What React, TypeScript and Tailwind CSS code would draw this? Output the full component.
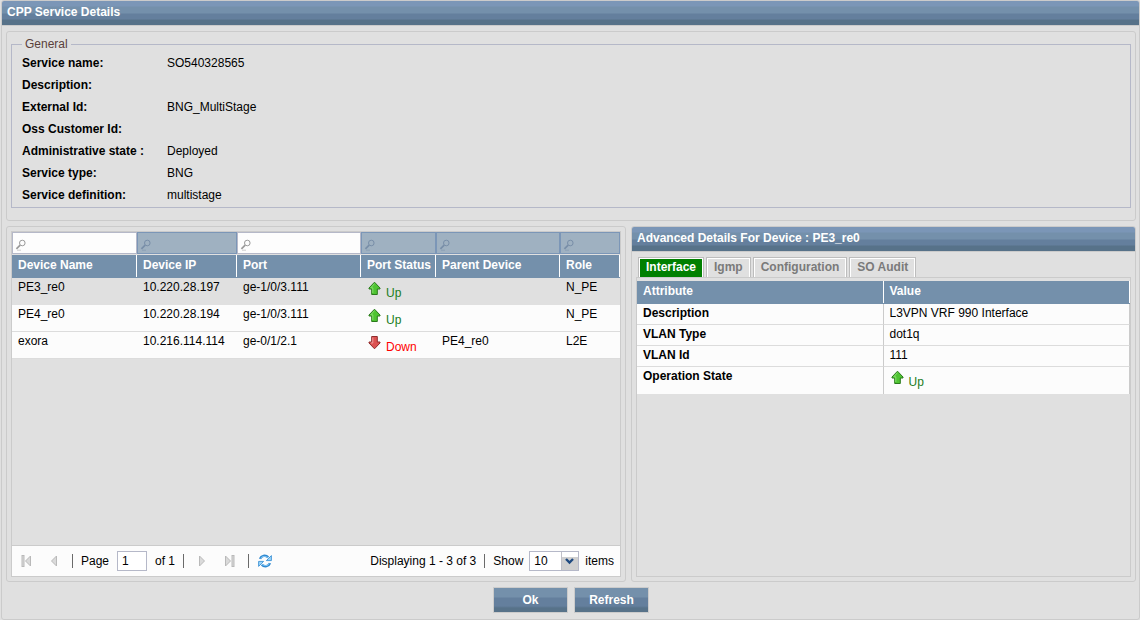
import { useState } from "react";

const BAR =
  "bg-[linear-gradient(to_bottom,#7b96b7_0,#7b96b7_5px,#7490ab_6px,#7490ab_12px,#647f9d_13px,#647f9d_18px,#577289_19px)]";
const BUTTON =
  "bg-[linear-gradient(to_bottom,#7490ab_0,#7490ab_9px,#647f9d_10px,#647f9d_18px,#577289_20px)]";

const generalFields = [
  { label: "Service name:", value: "SO540328565" },
  { label: "Description:", value: "" },
  { label: "External Id:", value: "BNG_MultiStage" },
  { label: "Oss Customer Id:", value: "" },
  { label: "Administrative state :", value: "Deployed" },
  { label: "Service type:", value: "BNG" },
  { label: "Service definition:", value: "multistage" },
];

const columns = [
  { name: "Device Name", width: "w-[125px]", searchable: true },
  { name: "Device IP", width: "w-[100px]", searchable: false },
  { name: "Port", width: "w-[124px]", searchable: true },
  { name: "Port Status", width: "w-[75px]", searchable: false },
  { name: "Parent Device", width: "w-[124px]", searchable: false },
  { name: "Role", width: "", searchable: false },
];

const devices = [
  { name: "PE3_re0", ip: "10.220.28.197", port: "ge-1/0/3.111", up: true, parent: "", role: "N_PE" },
  { name: "PE4_re0", ip: "10.220.28.194", port: "ge-1/0/3.111", up: true, parent: "", role: "N_PE" },
  { name: "exora", ip: "10.216.114.114", port: "ge-0/1/2.1", up: false, parent: "PE4_re0", role: "L2E" },
];

const attributes = [
  { name: "Description", value: "L3VPN VRF 990 Interface" },
  { name: "VLAN Type", value: "dot1q" },
  { name: "VLAN Id", value: "111" },
];

const tabs = ["Interface", "Igmp", "Configuration", "SO Audit"];

function ArrowIcon({ up }: { up: boolean }) {
  return up ? (
    <svg width="14" height="15" viewBox="0 0 14 15" className="shrink-0">
      <path d="M7.5 1.2 L13 7 V8 H10.3 V13.5 H4.7 V8 H2 V7 Z" fill="#4fc432" stroke="#2a7a1c" />
      <path d="M7.5 2.6 L3.8 6.8 H5.8 V12" fill="none" stroke="#86df6e" />
    </svg>
  ) : (
    <svg width="14" height="15" viewBox="0 0 14 15" className="shrink-0">
      <path d="M4.7 1.5 H10.3 V7 H13 V8 L7.5 13.8 L2 8 V7 H4.7 Z" fill="#dc5252" stroke="#8f2c2c" />
      <path d="M5.8 2.5 V8 H4" fill="none" stroke="#ef9c9c" />
    </svg>
  );
}

function Status({ up }: { up: boolean }) {
  return (
    <div className="flex items-start gap-[5px] pt-[3px]">
      <ArrowIcon up={up} />
      <span className={up ? "pt-[3px] text-[#1b7d1b]" : "pt-[3px] text-[#ff0000]"}>
        {up ? "Up" : "Down"}
      </span>
    </div>
  );
}

function SearchIcon({ dim }: { dim: boolean }) {
  return (
    <svg
      width="12"
      height="12"
      viewBox="0 0 12 12"
      fill="none"
      stroke={dim ? "#788ea8" : "#9a9a9a"}
      className="pointer-events-none absolute bottom-[3px] left-[3px]"
    >
      <circle cx="7.3" cy="4" r="2.8" />
      <path d="M5.2 6.2 L1.4 9.8" strokeWidth="1.7" />
      <path d="M2 11.2 H6" strokeWidth="0.5" />
    </svg>
  );
}

function PageIcon({ last, flip }: { last?: boolean; flip?: boolean }) {
  return (
    <svg width="14" height="14" viewBox="0 0 14 14" className={flip ? "-scale-x-100" : ""}>
      <path d="M3.5 2 L8.5 7 L3.5 12 Z" fill="#dadada" stroke="#b9b9b9" />
      {last && <rect x="10" y="1.5" width="2" height="11" fill="#dadada" stroke="#b9b9b9" />}
    </svg>
  );
}

function RefreshIcon() {
  return (
    <svg width="16" height="16" viewBox="0 0 16 16" fill="none">
      <path d="M3 5.8 C4.2 2.6 8.6 1.6 11.2 4.4" stroke="#2b86cf" strokeWidth="2.4" />
      <path d="M14.4 2.6 V7.6 H9.4 Z" fill="#9bd6fb" stroke="#2b86cf" strokeWidth="0.8" />
      <path d="M3.6 5.4 C5 3 8.8 2.5 11.4 5" stroke="#8fd0fa" strokeWidth="0.9" />
      <path d="M13 10.2 C11.8 13.4 7.4 14.4 4.8 11.6" stroke="#2b86cf" strokeWidth="2.4" />
      <path d="M1.6 13.4 V8.4 H6.6 Z" fill="#9bd6fb" stroke="#2b86cf" strokeWidth="0.8" />
      <path d="M12.4 10.6 C11 13 7.2 13.5 4.6 11" stroke="#8fd0fa" strokeWidth="0.9" />
    </svg>
  );
}

function Divider() {
  return <span className="h-3.5 w-px bg-[#6a6a6a]" />;
}

function GeneralPanel() {
  return (
    <section className="rounded-[3px] border border-[#cbcbcb] px-1 pt-1 pb-3">
      <fieldset className="border border-[#b5b8c8] px-2.5 pb-px">
        <legend className="px-[3px] leading-[16px] text-[#5a403c]">General</legend>
        <dl>
          {generalFields.map((f) => (
            <div key={f.label} className="flex h-[22px] items-center">
              <dt className="w-[145px] font-bold">{f.label}</dt>
              <dd>{f.value}</dd>
            </div>
          ))}
        </dl>
      </fieldset>
    </section>
  );
}

function Pager() {
  return (
    <div className="flex h-[31px] items-center border-t border-[#cbcbcb] bg-[#fcfcfc] pr-1.5 pl-2">
      <div className="flex items-center gap-3">
        <button type="button" aria-label="First page">
          <PageIcon last flip />
        </button>
        <button type="button" aria-label="Previous page">
          <PageIcon flip />
        </button>
        <Divider />
      </div>
      <label className="flex items-center gap-2 pl-2">
        Page
        <input
          defaultValue="1"
          className="h-5 w-[30px] border border-[#b5b8c8] bg-white pl-1 text-[12px]"
        />
        <span>of 1</span>
      </label>
      <div className="flex items-center gap-3 pl-2">
        <Divider />
        <button type="button" aria-label="Next page">
          <PageIcon />
        </button>
        <button type="button" aria-label="Last page">
          <PageIcon last />
        </button>
        <Divider />
      </div>
      <button type="button" aria-label="Reload" className="pl-2">
        <RefreshIcon />
      </button>
      <span className="ml-auto pr-2">Displaying 1 - 3 of 3</span>
      <Divider />
      <label className="flex items-center gap-1.5 pl-2">
        Show
        <span className="relative flex">
          <select className="h-5 w-[50px] appearance-none border border-[#b5b8c8] bg-white pl-1 text-[12px]">
            <option>10</option>
            <option>20</option>
            <option>50</option>
          </select>
          <svg
            width="17"
            height="18"
            viewBox="0 0 17 18"
            className="pointer-events-none absolute top-px right-px"
          >
            <rect width="17" height="5" fill="#ffffff" />
            <rect y="5" width="17" height="13" fill="#cfcfcf" />
            <path d="M0.5 0 V18" stroke="#c0c0c8" />
            <path d="M5 7 L8.5 10.5 L12 7" fill="none" stroke="#1f4a80" strokeWidth="2.4" />
          </svg>
        </span>
        items
      </label>
    </div>
  );
}

function DeviceGrid() {
  return (
    <section className="flex min-w-0 flex-col rounded-[3px] border border-[#cbcbcb] p-1">
      <div className="flex flex-1 flex-col border border-[#cbcbcb]">
        <table className="w-full table-fixed border-separate border-spacing-0 text-left">
          <thead>
            <tr>
              {columns.map((c) => (
                <td key={c.name} className={`${c.width} h-[23px] p-0 align-top`}>
                  <div className="relative flex">
                    <input
                      aria-label={`Filter ${c.name}`}
                      disabled={!c.searchable}
                      className={
                        c.searchable
                          ? "h-[22px] w-full border border-[#b5b8c8] bg-[#fdfdfd] pl-4"
                          : "h-[22px] w-full border border-[#7b96b7] bg-[#9fb1c1] pl-4"
                      }
                    />
                    <SearchIcon dim={!c.searchable} />
                  </div>
                </td>
              ))}
            </tr>
            <tr>
              {columns.map((c) => (
                <th key={c.name} className="h-[23px] bg-[#7490ab] p-0 align-top text-white">
                  <div className="h-[22px] border-r border-white pt-px pl-1.5 whitespace-nowrap">
                    {c.name}
                  </div>
                </th>
              ))}
            </tr>
          </thead>
          <tbody>
            {devices.map((d, i) => (
              <tr
                key={d.name}
                className={
                  i === 0
                    ? "h-[27px] align-top *:border-b *:border-[#e0e0e0] *:p-0 *:pl-1.5"
                    : "h-[27px] bg-[#fcfcfc] align-top *:border-b *:border-[#dcdcdc] *:p-0 *:pl-1.5"
                }
              >
                <td>{d.name}</td>
                <td>{d.ip}</td>
                <td>{d.port}</td>
                <td><Status up={d.up} /></td>
                <td>{d.parent}</td>
                <td>{d.role}</td>
              </tr>
            ))}
          </tbody>
        </table>
        <div className="mt-auto">
          <Pager />
        </div>
      </div>
    </section>
  );
}

function AdvancedDetails() {
  const [active, setActive] = useState("Interface");

  return (
    <section className="flex min-w-0 flex-col overflow-hidden rounded-[3px] border border-[#cbcbcb]">
      <h2 className={`${BAR} h-[25px] border-b border-[#cbcbcb] pt-0.5 pl-[5px] font-bold text-white`}>
        Advanced Details For Device : PE3_re0
      </h2>
      <div className="flex flex-1 flex-col px-1 pt-[5px] pb-1">
        <div role="tablist" className="flex gap-0.5 pl-0.5">
          {tabs.map((t) => (
            <button
              key={t}
              type="button"
              role="tab"
              aria-selected={t === active}
              onClick={() => setActive(t)}
              className="border border-b-0 border-[#bdbdbd] leading-[16px] font-bold"
            >
              <span
                className={
                  t === active
                    ? "block h-[19px] border border-b-0 border-white bg-[#008000] px-1.5 text-white"
                    : "block h-[19px] border border-b-0 border-white px-1.5 text-[#7a7a7a]"
                }
              >
                {t}
              </span>
            </button>
          ))}
        </div>
        <div className="flex-1 border border-[#cbcbcb] pt-[3px]">
          <table className="w-full table-fixed border-separate border-spacing-0 text-left">
            <thead>
              <tr className="bg-[#7490ab] text-white">
                {["Attribute", "Value"].map((h) => (
                  <th key={h} className="h-[23px] p-0 align-top">
                    <div className="h-[22px] border-r border-white pt-px pl-1.5">{h}</div>
                  </th>
                ))}
              </tr>
            </thead>
            <tbody>
              {attributes.map((a) => (
                <tr key={a.name} className="h-[21px] bg-[#fcfcfc] align-top *:border-r *:border-b *:border-r-[#cbcbcb] *:border-b-[#dcdcdc] *:p-0 *:pl-1.5">
                  <th>{a.name}</th>
                  <td>{a.value}</td>
                </tr>
              ))}
              <tr className="h-[27px] bg-[#fcfcfc] align-top *:border-r *:border-[#cbcbcb] *:p-0 *:pl-1.5">
                <th>Operation State</th>
                <td><Status up /></td>
              </tr>
            </tbody>
          </table>
        </div>
      </div>
    </section>
  );
}

export default function App() {
  return (
    <div className="flex min-h-screen flex-col bg-[#e0e0e0] pl-px font-['Liberation_Sans',Arial,sans-serif] text-[12px] leading-[18px] text-black">
      <div className="flex flex-1 flex-col overflow-hidden rounded-[3px] border border-[#cbcbcb]">
        <h1 className={`${BAR} h-[25px] border-b border-[#cbcbcb] pt-0.5 pl-[5px] font-bold text-white`}>
          CPP Service Details
        </h1>
        <main className="flex flex-1 flex-col gap-[5px] pt-[5px] pr-[3px] pb-1.5 pl-1">
          <GeneralPanel />
          <div className="grid flex-1 grid-cols-[620fr_505fr] gap-[5px]">
            <DeviceGrid />
            <AdvancedDetails />
          </div>
          <div className="flex justify-center gap-1.5">
            {["Ok", "Refresh"].map((b) => (
              <button
                key={b}
                type="button"
                className={`${BUTTON} h-[26px] w-[75px] border border-[#cbcbcb] font-bold text-white`}
              >
                {b}
              </button>
            ))}
          </div>
        </main>
      </div>
    </div>
  );
}
